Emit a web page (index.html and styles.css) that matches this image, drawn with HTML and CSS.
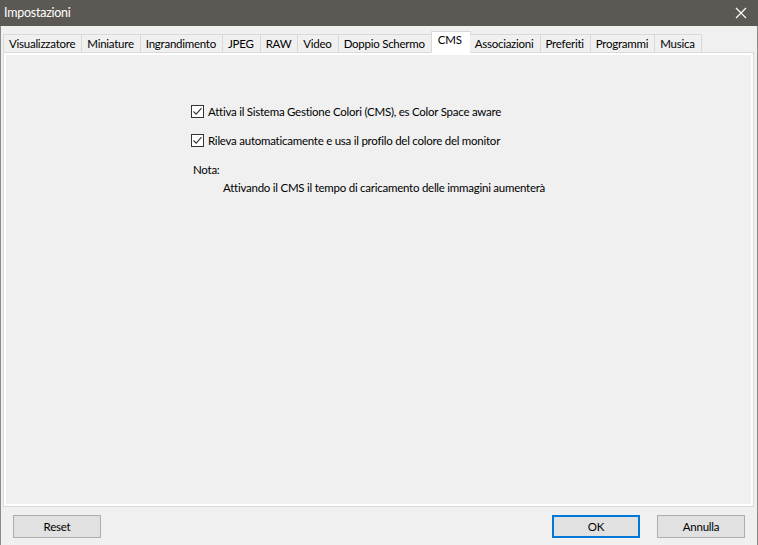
FILE: index.html
```html
<!DOCTYPE html>
<html lang="it">

<head>
    <meta charset="UTF-8">
    <meta name="viewport" content="width=device-width, initial-scale=1.0">
    <title>Impostazioni</title>
    <link rel="stylesheet" href="styles.css">
</head>

<body>
    <div class="window">
        <div class="titlebar">
            <span class="title">Impostazioni</span>
            <span class="close">
                <svg width="12" height="12" viewBox="0 0 12 12">
                    <path d="M1 1L11 11M11 1L1 11" stroke="#fff" stroke-width="1.2" fill="none" />
                </svg>
            </span>
        </div>

        <div class="tabs">
            <div class="tab">Visualizzatore</div>
            <div class="tab">Miniature</div>
            <div class="tab">Ingrandimento</div>
            <div class="tab">JPEG</div>
            <div class="tab">RAW</div>
            <div class="tab">Video</div>
            <div class="tab">Doppio Schermo</div>
            <div class="tab active">CMS</div>
            <div class="tab">Associazioni</div>
            <div class="tab">Preferiti</div>
            <div class="tab">Programmi</div>
            <div class="tab">Musica</div>
        </div>

        <div class="panel">
            <div class="panel-inner">
                <label class="check-row">
                    <span class="checkbox">
                        <svg width="11" height="11" viewBox="0 0 11 11">
                            <path d="M1.5 5.5L4.2 8.2L9.5 2.2" stroke="#333" stroke-width="1.1" fill="none" />
                        </svg>
                    </span>
                    Attiva il Sistema Gestione Colori (CMS), es Color Space aware
                </label>
                <label class="check-row">
                    <span class="checkbox">
                        <svg width="11" height="11" viewBox="0 0 11 11">
                            <path d="M1.5 5.5L4.2 8.2L9.5 2.2" stroke="#333" stroke-width="1.1" fill="none" />
                        </svg>
                    </span>
                    Rileva automaticamente e usa il profilo del colore del monitor
                </label>
                <div class="note-title">Nota:</div>
                <div class="note-text">Attivando il CMS il tempo di caricamento delle immagini aumenterà</div>
            </div>
        </div>

        <div class="footer">
            <button class="btn">Reset</button>
            <div class="footer-right">
                <button class="btn default">OK</button>
                <button class="btn">Annulla</button>
            </div>
        </div>
    </div>
</body>

</html>
```

FILE: styles.css
```css
html,
body {
    margin: 0;
    padding: 0;
}

body {
    font-family: Lato, "Noto Sans", Arial, sans-serif;
    font-size: 11.5px;
    letter-spacing: -0.25px;
    color: #000;
    background-color: #f0f0f0;
}

.window {
    width: 758px;
    height: 545px;
    box-sizing: border-box;
    border-left: 1px solid #8c8a88;
    border-right: 1px solid #8c8a88;
    display: flex;
    flex-direction: column;
    background-color: #f0f0f0;
}

.titlebar {
    height: 26px;
    margin: 0 -1px;
    background-color: #5c5854;
    color: #fff;
    display: flex;
    align-items: center;
    justify-content: space-between;
}

.title {
    font-size: 12.5px;
    padding-left: 4px;
    padding-bottom: 2px;
}

.close {
    width: 12px;
    height: 12px;
    margin-right: 11px;
    margin-bottom: 1px;
}

.tabs {
    display: flex;
    align-items: flex-end;
    height: 27px;
    padding-left: 2px;
    margin-bottom: -1px;
    position: relative;
    z-index: 1;
}

.tab {
    height: 17px;
    line-height: 18px;
    padding: 0 6px 0 5px;
    border: 1px solid #d9d9d9;
    border-right: none;
    background-color: #f0f0f0;
    white-space: nowrap;
}

.tab:nth-child(12) {
    border-right: 1px solid #d9d9d9;
}

.tab.active {
    height: 20px;
    line-height: 16px;
    background-color: #fff;
    border-bottom-color: #fff;
    border-right: 1px solid #d9d9d9;
    margin-right: -1px;
    padding: 0 8px 0 6px;
}

.tab.active + .tab {
    border-left: none;
}

.panel {
    flex: 1;
    margin: 0 3px 0 2px;
    border: 1px solid #d9d9d9;
    background-color: #fff;
    padding: 2px;
}

.panel-inner {
    height: 100%;
    box-sizing: border-box;
    background-color: #f0f0f0;
    padding: 49px 0 0 185px;
}

.check-row {
    display: flex;
    align-items: center;
    height: 15px;
    margin-bottom: 14px;
}

.checkbox {
    width: 11px;
    height: 11px;
    border: 1px solid #333;
    background-color: #fff;
    margin-right: 4px;
    display: flex;
}

.note-title {
    padding-left: 2px;
    margin-top: 14px;
    line-height: 16px;
}

.note-text {
    padding-left: 32px;
    margin-top: 2px;
    line-height: 16px;
}

.footer {
    height: 38px;
    display: flex;
    align-items: center;
    justify-content: space-between;
    padding: 0 12px 0 12px;
}

.footer-right {
    display: flex;
    gap: 17px;
}

.btn {
    width: 88px;
    height: 23px;
    font-family: inherit;
    font-size: 11.5px;
    letter-spacing: -0.25px;
    background-color: #e1e1e1;
    border: 1px solid #adadad;
    padding: 0;
    color: #000;
}

.btn.default {
    border: 2px solid #0078d7;
}
```
